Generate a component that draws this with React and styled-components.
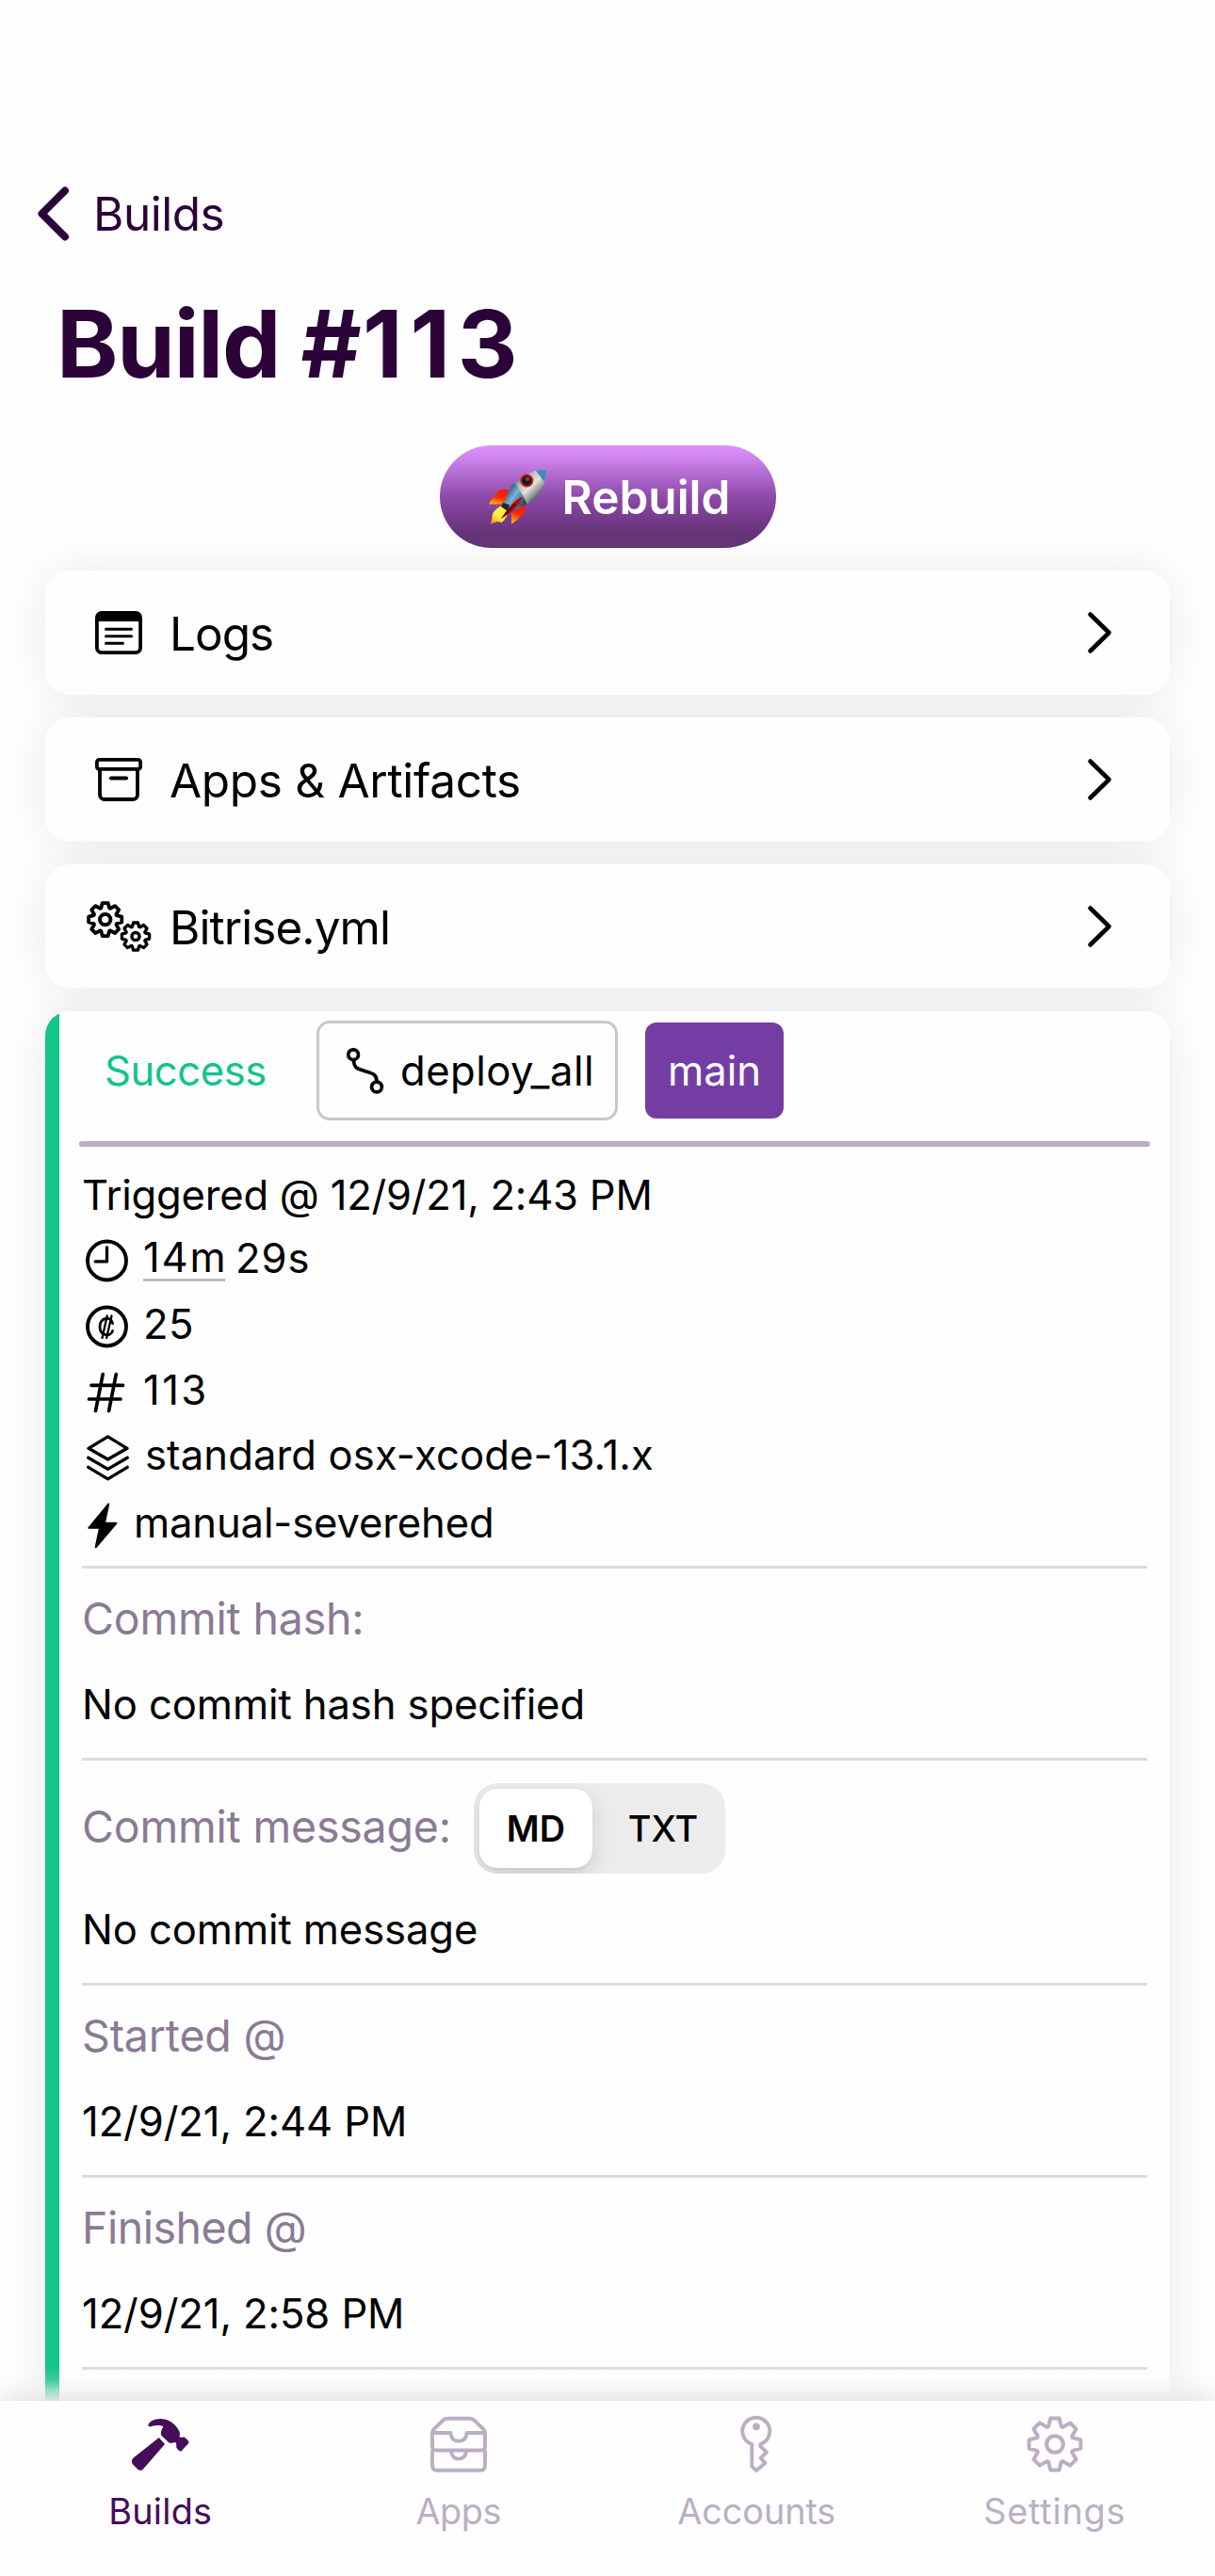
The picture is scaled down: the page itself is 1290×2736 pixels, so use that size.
import React from "react";
import styled, { createGlobalStyle } from "styled-components";

const colors = {
  ink: "#2b0338",
  text: "#000000",
  muted: "#8a7a94",
  lilac: "#bbaec4",
  active: "#460d5a",
  success: "#11c58b",
  purple: "#743da4",
  surface: "#fefefe",
  line: "#dcdcdc",
};

const GlobalStyle = createGlobalStyle`
  * { box-sizing: border-box; }
  html, body { margin: 0; padding: 0; background: ${colors.surface}; }
  body { font-family: Inter, "Liberation Sans", sans-serif; color: ${colors.text}; }
  button { font: inherit; color: inherit; border: 0; background: none; padding: 0; margin: 0; }
  svg { display: block; flex: none; overflow: visible; }
`;

const Screen = styled.div`
  display: flex;
  flex-direction: column;
  width: 1290px;
  height: 2736px;
  overflow: hidden;
  background: ${colors.surface};
`;

const ScrollArea = styled.main`
  flex: 1;
  min-height: 0;
  overflow: hidden;
  display: flex;
  flex-direction: column;
`;

const BackButton = styled.button`
  display: flex;
  align-items: center;
  gap: 26px;
  flex: none;
  align-self: flex-start;
  height: 88px;
  margin-top: 183px;
  padding-left: 40px;
  color: ${colors.ink};
  font-size: 49.5px;
  letter-spacing: -0.5px;
`;

const Title = styled.h1`
  display: flex;
  flex: none;
  margin: 0;
  padding-left: 60px;
  color: ${colors.ink};
  font-size: 99px;
  font-weight: 700;
  line-height: 188px;
  letter-spacing: 1.2px;
  white-space: pre;
`;

const TitleWord = styled.span`
  letter-spacing: -1.2px;
`;

const TitleNumber = styled.span`
  letter-spacing: 7.8px;
`;

const RebuildButton = styled.button`
  display: flex;
  align-items: center;
  gap: 17px;
  flex: none;
  align-self: center;
  width: 357px;
  height: 109px;
  margin-top: 14px;
  padding-left: 52px;
  border-radius: 55px;
  background: linear-gradient(
    180deg,
    #df91ff 0%,
    #c47ce4 18%,
    #8e4aa8 50%,
    #66327a 85%,
    #643773 100%
  );
  color: #fff;
  font-size: 49.5px;
  font-weight: 600;
  position: relative;
  z-index: 1;
`;

const Cards = styled.div`
  display: flex;
  flex-direction: column;
  gap: 24px;
  flex: 1;
  padding: 24px 48px 0;
`;

const LinkCard = styled.div`
  display: flex;
  align-items: center;
  flex: none;
  height: 132px;
  padding: 0 62px 0 24px;
  border-radius: 26px;
  background: ${colors.surface};
  box-shadow: 0 0 50px rgba(0, 0, 0, 0.085);
  font-size: 49.5px;
`;

const CardIcon = styled.span`
  display: flex;
  justify-content: center;
  width: 108px;
`;

const CardLabel = styled.span`
  flex: 1;
  padding-top: 1px;
  letter-spacing: ${(p) => p.$tracking}px;
`;

const BuildCard = styled.section`
  flex: none;
  height: 1700px;
  border-radius: 26px;
  background: linear-gradient(90deg, ${colors.success} 15px, ${colors.surface} 15px);
  box-shadow: 0 0 50px rgba(0, 0, 0, 0.085);
`;

const BadgeRow = styled.div`
  display: flex;
  align-items: center;
  height: 126px;
  padding-left: 63px;
  font-size: 43.6px;
`;

const Status = styled.span`
  width: 225px;
  color: ${colors.success};
  letter-spacing: -0.45px;
`;

const WorkflowBadge = styled.span`
  display: flex;
  align-items: center;
  gap: 18px;
  width: 320px;
  height: 106px;
  padding-left: 29px;
  border: 3px solid #c8c8c8;
  border-radius: 14px;
  letter-spacing: 0.48px;
`;

const BranchBadge = styled.span`
  display: flex;
  align-items: center;
  justify-content: center;
  width: 147px;
  height: 102px;
  margin-left: 29px;
  border-radius: 12px;
  background: ${colors.purple};
  color: #fff;
`;

const Rule = styled.div`
  height: 6px;
  margin: 12px 21px 0 36px;
  border-radius: 3px;
  background: #b9adc1;
`;

const Details = styled.div`
  padding: 0 24px 0 39px;
`;

const Facts = styled.div`
  padding: 16px 0 10px;
  border-bottom: 3px solid ${colors.line};
  font-size: 43.6px;
`;

const Fact = styled.div`
  display: flex;
  align-items: center;
  height: ${(p) => p.$height}px;
  letter-spacing: ${(p) => p.$tracking || 0}px;
`;

const FactIcon = styled.span`
  width: ${(p) => p.$slot || 65}px;
  padding-top: 6px;
`;

const Minutes = styled.span`
  width: 87px;
  height: 49px;
  line-height: 47px;
  margin: 1px 11px 0 0;
  border-bottom: 3px solid #bababa;
  letter-spacing: 1.8px;
`;

const Section = styled.div`
  padding-bottom: 17px;
  border-bottom: 3px solid ${colors.line};
`;

const SectionLabel = styled.div`
  display: flex;
  align-items: center;
  gap: 24px;
  height: ${(p) => (p.$tall ? 140 : 106)}px;
  color: ${colors.muted};
  font-size: 46.5px;
  letter-spacing: ${(p) => p.$tracking || -0.2}px;
`;

const SectionValue = styled.div`
  font-size: 43.6px;
  line-height: ${(p) => (p.$tall ? 79 : 78)}px;
  letter-spacing: -0.1px;
`;

const Segmented = styled.div`
  display: flex;
  justify-content: space-between;
  width: 267px;
  height: 96px;
  margin-top: 4px;
  padding: 6px;
  border-radius: 25px;
  background: #ececec;
  overflow: hidden;
`;

const Segment = styled.button`
  width: 120px;
  height: 84px;
  border-radius: 19px;
  color: ${colors.text};
  font-size: 37.8px;
  font-weight: ${(p) => (p.$selected ? 600 : 500)};
  background: ${(p) => (p.$selected ? "#fff" : "transparent")};
  box-shadow: ${(p) => (p.$selected ? "0 9px 24px rgba(0,0,0,0.13), 0 3px 3px rgba(0,0,0,0.04)" : "none")};
`;

const TabBar = styled.nav`
  position: relative;
  z-index: 2;
  display: flex;
  flex: none;
  height: 186px;
  padding: 16px 12px 0;
  background: ${colors.surface};
  box-shadow: 0 0 32px rgba(0, 0, 0, 0.17);
`;

const BottomFade = styled.div`
  position: relative;
  z-index: 1;
  flex: none;
  height: 38px;
  margin-top: -38px;
  background: linear-gradient(
    180deg,
    rgba(254, 254, 254, 0) 0%,
    rgba(254, 254, 254, 0.18) 42%,
    rgba(254, 254, 254, 0.62) 72%,
    rgba(254, 254, 254, 0.92) 100%
  );
`;

const Tab = styled.button`
  display: flex;
  flex-direction: column;
  align-items: center;
  justify-content: flex-start;
  gap: 17px;
  flex: 1;
  color: ${(p) => (p.$active ? colors.active : colors.lilac)};
  font-size: 37.8px;
  line-height: 48px;
  letter-spacing: ${(p) => p.$tracking || 0}px;
`;

const stroke = {
  fill: "none",
  stroke: "currentColor",
  strokeLinecap: "round",
  strokeLinejoin: "round",
};

function gearPath(cx, cy, tip, root) {
  const at = (r, deg) => {
    const a = (deg * Math.PI) / 180;
    return `${(cx + r * Math.cos(a)).toFixed(2)} ${(cy + r * Math.sin(a)).toFixed(2)}`;
  };
  const points = [];
  for (let k = 0; k < 8; k += 1) {
    const a = k * 45;
    points.push(at(root, a - 20), at(tip, a - 9.5), at(tip, a + 9.5), at(root, a + 20));
  }
  return `M${points.join("L")}Z`;
}

const BackIcon = () => (
  <svg width="33" height="58" viewBox="0 0 33 58" {...stroke} strokeWidth="8">
    <path d="M29 4.5 4.5 29 29 53.500" />
  </svg>
);

const ChevronIcon = () => (
  <svg width="25" height="44" viewBox="0 0 25 44" {...stroke} strokeWidth="4.6">
    <path d="M2.500 2.500 22.500 22 2.500 41.500" />
  </svg>
);

const LogsIcon = () => (
  <svg width="50" height="46" viewBox="0 0 50 46" {...stroke}>
    <rect x="1.900" y="1.900" width="46.200" height="42.200" rx="5" strokeWidth="3.800" />
    <path d="M2 11.500V6a4 4 0 0 1 4-4h38a4 4 0 0 1 4 4v5.500l-2-1H4Z" fill="currentColor" strokeWidth="1" />
    <path d="M11.500 19.300h27M11.500 26.700h27M11.500 34.300h18" strokeWidth="3" />
  </svg>
);

const ArchiveIcon = () => (
  <svg width="50" height="46" viewBox="0 0 50 46" {...stroke} strokeWidth="3.800">
    <rect x="1.900" y="1.900" width="46.200" height="10" rx="2.500" />
    <path d="M5 12v27a5 5 0 0 0 5 5h30a5 5 0 0 0 5-5V12" />
    <path d="M17 21.500h16" strokeWidth="4.200" />
  </svg>
);

const GearsIcon = () => (
  <svg width="69" height="55" viewBox="0 0 69 55" {...stroke}>
    <path d={gearPath(19.7, 19.6, 17.8, 12.9)} strokeWidth="3.800" />
    <circle cx="19.700" cy="19.600" r="5.700" strokeWidth="4" />
    <path d={gearPath(52, 37.6, 14.8, 10.8)} strokeWidth="3.300" />
    <circle cx="52" cy="37.600" r="4.100" strokeWidth="3.300" />
  </svg>
);

const RocketIcon = () => (
  <svg width="61" height="59" viewBox="0 0 61 59">
    <defs>
      <linearGradient id="hull" x1="0.25" y1="0.2" x2="0.8" y2="0.75">
        <stop offset="0" stopColor="#3a5f80" />
        <stop offset="0.3" stopColor="#b9c4c8" />
        <stop offset="0.55" stopColor="#e4e4da" />
        <stop offset="0.8" stopColor="#8c9394" />
        <stop offset="1" stopColor="#2f3d45" />
      </linearGradient>
      <linearGradient id="tail" x1="0.1" y1="0.3" x2="0.8" y2="0.9">
        <stop offset="0" stopColor="#27567f" />
        <stop offset="0.4" stopColor="#7fb2da" />
        <stop offset="1" stopColor="#23425c" />
      </linearGradient>
      <linearGradient id="fin" x1="0.7" y1="0" x2="0.3" y2="1">
        <stop offset="0" stopColor="#f01800" />
        <stop offset="0.55" stopColor="#ff2a00" />
        <stop offset="1" stopColor="#ffb000" />
      </linearGradient>
      <linearGradient id="flame" x1="0.8" y1="0" x2="0.1" y2="1">
        <stop offset="0" stopColor="#ffe24a" />
        <stop offset="0.6" stopColor="#fff04c" />
        <stop offset="1" stopColor="#f58a00" />
      </linearGradient>
    </defs>
    <path d="M22 22 12 22Q5 28 0 37.500L16 37.500Z" fill="url(#fin)" />
    <path d="M39 37 38 46Q33 53 24 58.500L24 47Z" fill="url(#fin)" />
    <path d="M15 38Q6 43 4 48L2 58.500 9 56 14 57Q20 50 22 44Z" fill="url(#flame)" />
    <path d="M61 1C50 0 40 4 30 12 23 18 20 24 17 36L23 43C35 41 46 36 52 28 59 20 61 9 61 1Z" fill="url(#hull)" />
    <path d="M28 14C22 20 19 26 17 36L23 43C29 42 36 40 41 37Z" fill="url(#tail)" />
    <path d="M61 1Q55 0 50 2L59 14Q61.500 6 61 1Z" fill="#4788bd" />
    <path d="M28 14Q37 24 41 37" fill="none" stroke="#d2bd78" strokeWidth="0.800" />
    <path d="M15 36 22 38 20 45 13 40Z" fill="#182a38" />
    <path d="M36 30Q31 31 26 36 18 44 13 53 25 46 32 37Z" fill="#bb0906" />
    <path d="M13 53Q18 45 26 37L29 38Q20 48 13 53Z" fill="#650a08" />
    <circle cx="40.300" cy="12.500" r="6" fill="#111a20" stroke="#df1010" strokeWidth="2" />
    <circle cx="41" cy="10.800" r="2.300" fill="#4b5557" />
  </svg>
);

const WorkflowIcon = () => (
  <svg width="39" height="49" viewBox="0 0 39 49" {...stroke} strokeWidth="3.700">
    <circle cx="7.100" cy="7.200" r="5.400" />
    <circle cx="32" cy="41.500" r="5.400" />
    <path d="M7.500 13c.5 8 2.500 8.500 11.500 11.500s13 3 13 11.500" />
  </svg>
);

const ClockIcon = () => (
  <svg width="53" height="46" viewBox="0 0 53 46" {...stroke}>
    <circle cx="26.500" cy="23" r="20.500" strokeWidth="3.900" />
    <path d="M26.500 8.800v15.100H14.200" strokeWidth="3.300" />
  </svg>
);

const CreditIcon = () => (
  <svg width="53" height="46" viewBox="0 0 53 46" {...stroke}>
    <circle cx="26.500" cy="23" r="20.500" strokeWidth="3.900" />
    <path d="M32.600 19.500C31.300 12.200 19 12.300 19 23s12 11 13.600 4.500" strokeWidth="2.800" />
    <path d="M26.800 11.500 21.500 35M31.500 11.500 26.200 35" strokeWidth="2.300" />
  </svg>
);

const HashIcon = () => (
  <svg width="53" height="44" viewBox="0 0 53 44" {...stroke} strokeWidth="3.700">
    <path d="M22.200 2.500 14.500 41.500M36.300 2.500 28.600 41.500M10 14.300h33.500M7.500 29h33.500" />
  </svg>
);

const StackIcon = () => (
  <svg width="53" height="49" viewBox="0 0 53 49" {...stroke} strokeWidth="3.300">
    <path d="M27.500 1.900 48 14.300 27.500 26 7 14.300Z" />
    <path d="M6.700 24.300 27.500 36.400 48.300 24.300M6.700 34.300 27.500 46.800 48.300 34.300" />
  </svg>
);

const BoltIcon = () => (
  <svg width="40" height="49" viewBox="0 0 40 49">
    <path
      d="M28.300 1.400 7.300 26.800H19L14.700 47.300 36.400 21.800H23.900Z"
      fill="currentColor"
      stroke="currentColor"
      strokeWidth="2"
      strokeLinejoin="round"
    />
  </svg>
);

const HammerIcon = () => (
  <svg width="62" height="60" viewBox="0 0 62 60" fill="currentColor">
    <path d="M18.500 9.500C19 6 25 3 31 3c8 0 14 4 18 9.500 3 4 3.500 6 2.500 9.500 1.500 1.500 2.500.5 4.500.5 1.500 0 4 2.800 5 4.200.8 1.100.6 1.700 0 2.500l-7 7.500c-1.200 1.200-2 1-3 0-1.500-1.200-2.800-2.500-2.800-4.200 0-2 .4-3.500-1-4.500-2 .2-3.700.9-5 .9-1 0-1.600-.4-2.400-1.200L32.600 21c-1.500-2-.4-6.500 1.800-9.500-2.600-2.200-7.600-1.900-13.600-.2-1.500.4-2.500-.4-2.300-1.800Z" />
    <path d="M29.800 23 36 30 13.200 56.300q-3.200 3.100-6.400 0L2.300 51.700q-3-3.400 0-6.900Z" />
  </svg>
);

const TrayIcon = () => (
  <svg width="60" height="60" viewBox="0 0 60 60" {...stroke} strokeWidth="3.900">
    <path d="M2 18v14q0 4.500 4.500 4.500h47q4.500 0 4.500-4.500V18q0-2.500-1.800-4L46.500 4.500Q44.500 2.700 42 2.700H18q-2.500 0-4.500 1.800L3.800 14Q2 15.500 2 18Z" />
    <path d="M2.500 18H21.500Q22 26.800 30 26.800T38.500 18H57.500" strokeLinecap="butt" />
    <path d="M2 37.500V52.500q0 5.200 5.200 5.200H52.800Q58 57.700 58 52.500V37.500" />
    <path d="M22 37.500Q23 45.600 30 45.600T38 37.500" strokeLinecap="butt" />
  </svg>
);

const KeyIcon = () => (
  <svg width="34" height="60" viewBox="0 0 34 60" {...stroke} strokeWidth="3.900">
    <path d="M12.300 30A14.500 14.500 0 1 1 21.300 30V32.200L28 38.500 21.600 44.700 26.500 50 17 58 12.300 53.600Z" />
    <circle cx="17" cy="11.300" r="3.900" fill="currentColor" stroke="none" />
  </svg>
);

const GearIcon = () => (
  <svg width="60" height="60" viewBox="0 0 60 60" {...stroke} strokeWidth="4">
    <path d={gearPath(30, 30, 27.8, 20)} />
    <circle cx="30" cy="30" r="8.800" strokeWidth="4.100" />
  </svg>
);

const links = [
  { label: "Logs", icon: <LogsIcon />, tracking: -1 },
  { label: "Apps & Artifacts", icon: <ArchiveIcon />, tracking: -0.31 },
  { label: "Bitrise.yml", icon: <GearsIcon />, tracking: -0.94 },
];

const tabs = [
  { label: "Builds", icon: <HammerIcon />, active: true, tracking: 0.29 },
  { label: "Apps", icon: <TrayIcon />, tracking: -0.4 },
  { label: "Accounts", icon: <KeyIcon />, tracking: -0.09 },
  { label: "Settings", icon: <GearIcon />, tracking: 0.8 },
];

export default function App() {
  return (
    <>
      <GlobalStyle />
      <Screen>
        <ScrollArea>
          <BackButton>
            <BackIcon />
            <span>Builds</span>
          </BackButton>
          <Title>
            <TitleWord>Build </TitleWord>
            <span>#</span>
            <TitleNumber>113</TitleNumber>
          </Title>
          <RebuildButton>
            <RocketIcon />
            <span>Rebuild</span>
          </RebuildButton>
          <Cards>
            {links.map((link) => (
              <LinkCard key={link.label}>
                <CardIcon>{link.icon}</CardIcon>
                <CardLabel $tracking={link.tracking}>{link.label}</CardLabel>
                <ChevronIcon />
              </LinkCard>
            ))}
            <BuildCard>
              <BadgeRow>
                <Status>Success</Status>
                <WorkflowBadge>
                  <WorkflowIcon />
                  <span>deploy_all</span>
                </WorkflowBadge>
                <BranchBadge>main</BranchBadge>
              </BadgeRow>
              <Rule />
              <Details>
                <Facts>
                  <Fact $height={70} $tracking={-0.24}>Triggered @ 12/9/21, 2:43 PM</Fact>
                  <Fact $height={64} $tracking={1}>
                    <FactIcon><ClockIcon /></FactIcon>
                    <Minutes>14m</Minutes>
                    <span>29s</span>
                  </Fact>
                  <Fact $height={76} $tracking={0.4}>
                    <FactIcon><CreditIcon /></FactIcon>
                    <span>25</span>
                  </Fact>
                  <Fact $height={64} $tracking={2.4}>
                    <FactIcon><HashIcon /></FactIcon>
                    <span>113</span>
                  </Fact>
                  <Fact $height={74} $tracking={0.11}>
                    <FactIcon $slot={67}><StackIcon /></FactIcon>
                    <span>standard osx-xcode-13.1.x</span>
                  </Fact>
                  <Fact $height={71} $tracking={-0.15}>
                    <FactIcon $slot={55}><BoltIcon /></FactIcon>
                    <span>manual-severehed</span>
                  </Fact>
                </Facts>
                <Section>
                  <SectionLabel>Commit hash:</SectionLabel>
                  <SectionValue>No commit hash specified</SectionValue>
                </Section>
                <Section>
                  <SectionLabel $tall>
                    <span>Commit message:</span>
                    <Segmented>
                      <Segment $selected>MD</Segment>
                      <Segment>TXT</Segment>
                    </Segmented>
                  </SectionLabel>
                  <SectionValue $tall>No commit message</SectionValue>
                </Section>
                <Section>
                  <SectionLabel>Started @</SectionLabel>
                  <SectionValue>12/9/21, 2:44 PM</SectionValue>
                </Section>
                <Section>
                  <SectionLabel $tracking={-0.5}>Finished @</SectionLabel>
                  <SectionValue>12/9/21, 2:58 PM</SectionValue>
                </Section>
              </Details>
            </BuildCard>
          </Cards>
        </ScrollArea>
        <BottomFade />
        <TabBar>
          {tabs.map((tab) => (
            <Tab key={tab.label} $active={tab.active} $tracking={tab.tracking}>
              {tab.icon}
              <span>{tab.label}</span>
            </Tab>
          ))}
        </TabBar>
      </Screen>
    </>
  );
}
